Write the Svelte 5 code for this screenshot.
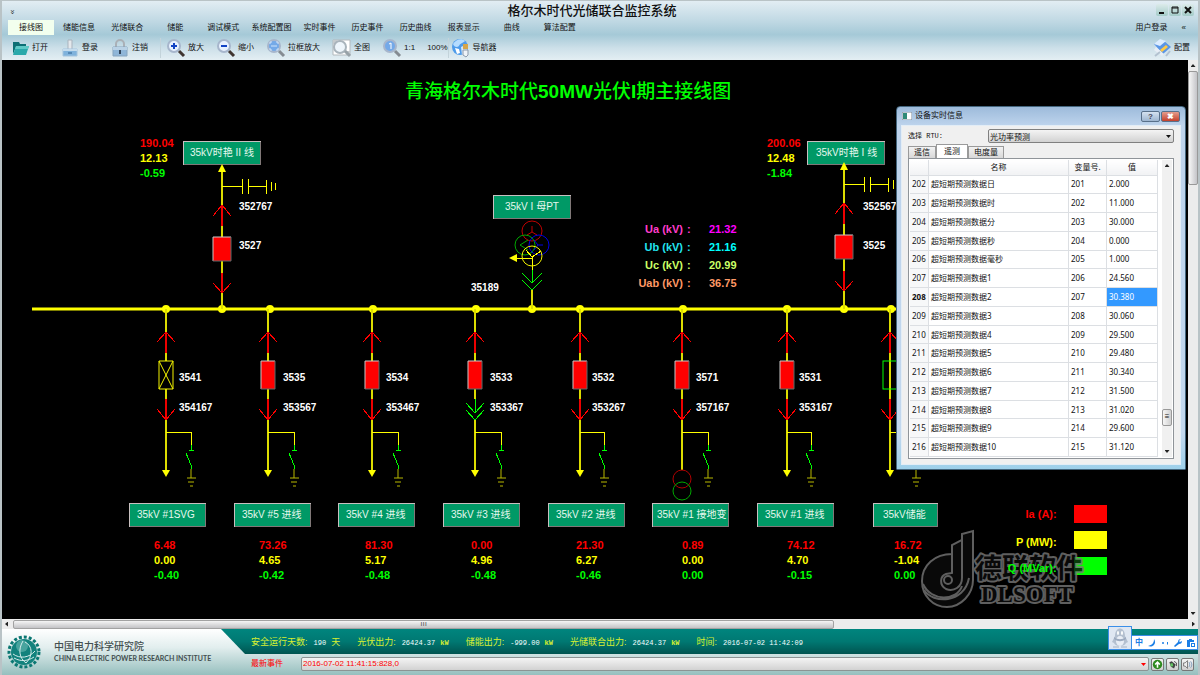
<script>
  const menuItems = ["接线图", "储能信息", "光储联合", "储能", "调试模式", "系统配置图", "实时事件", "历史事件", "历史曲线", "报表显示", "曲线", "算法配置"];
  let activeMenu = $state("接线图");

  const tools = [
    [
      { icon: "open", text: "打开" },
      { icon: "login", text: "登录" },
      { icon: "lock", text: "注销" },
    ],
    [
      { icon: "plus", text: "放大" },
      { icon: "minus", text: "缩小" },
      { icon: "frame", text: "拉框放大" },
      { icon: "full", text: "全图" },
      { icon: "one", text: "1:1" },
      { icon: "", text: "100%" },
    ],
    [{ icon: "globe", text: "导航器" }],
  ];

  // feeders below the bus: x = main line, dot = bus joint, bx = earthing branch
  const feeders = [
    { x: 166, dot: 166, bx: 191, lx: 179, no: "3541", sw: "354167", kind: "cross", name: "35kV #1SVG", nx: 129, tx: 8, vx: 154, v: ["6.48", "0.00", "-0.40"] },
    { x: 268, dot: 270, bx: 294, lx: 283, no: "3535", sw: "353567", kind: "red", name: "35kV #5 进线", nx: 234, tx: 8, vx: 259, v: ["73.26", "4.65", "-0.42"] },
    { x: 372, dot: 373, bx: 398, lx: 386, no: "3534", sw: "353467", kind: "red", name: "35kV #4 进线", nx: 338, tx: 8, vx: 365, v: ["81.30", "5.17", "-0.48"] },
    { x: 475, dot: 476, bx: 501, lx: 490, no: "3533", sw: "353367", kind: "red", open: true, name: "35kV #3 进线", nx: 443, tx: 8, vx: 471, v: ["0.00", "4.96", "-0.48"] },
    { x: 580, dot: 580, bx: 604, lx: 592, no: "3532", sw: "353267", kind: "red", name: "35kV #2 进线", nx: 548, tx: 8, vx: 576, v: ["21.30", "6.27", "-0.46"] },
    { x: 682, dot: 683, bx: 708, lx: 696, no: "3571", sw: "357167", kind: "red", transformer: true, name: "35kV #1 接地变", nx: 652, tx: 5, vx: 682, v: ["0.89", "0.00", "0.00"] },
    { x: 787, dot: 787, bx: 811, lx: 799, no: "3531", sw: "353167", kind: "red", name: "35kV #1 进线", nx: 757, tx: 8, vx: 787, v: ["74.12", "4.70", "-0.15"] },
    { x: 890, dot: 891, bx: 916, lx: 903, no: "", sw: "", kind: "green", name: "35kV储能", nx: 873, tx: 10, vx: 894, v: ["16.72", "-1.04", "0.00"] },
  ];

  const incomers = [
    { x: 222, y: 0, name: "35kV时艳 II 线", nx: 183, tx: 7, no: "3527", sw: "352767", lx: 239, vx: 140, v: ["190.04", "12.13", "-0.59"] },
    { x: 844, y: -2, name: "35kV时艳 I 线", nx: 807, tx: 9, no: "3525", sw: "352567", lx: 863, vx: 767, v: ["200.06", "12.48", "-1.84"] },
  ];

  const volts = [
    { name: "Ua (kV)", value: "21.32", color: "#ff3ccc", vcolor: "#ff00ff" },
    { name: "Ub (kV)", value: "21.16", color: "#22e4f0", vcolor: "#00ffff" },
    { name: "Uc (kV)", value: "20.99", color: "#ccff66", vcolor: "#ccff66" },
    { name: "Uab (kV)", value: "36.75", color: "#ff9966", vcolor: "#ff9966" },
  ];

  const legend = [
    { name: "Ia (A)", color: "#ff0000", y: 505, ty: 518 },
    { name: "P (MW)", color: "#ffff00", y: 531, ty: 546 },
    { name: "Q (MVar)", color: "#00ff00", y: 557, ty: 572 },
  ];

  const valueColors = ["#ff0000", "#ffff00", "#00ff00"];

  const names = ["日", "时", "分", "秒", "毫秒", "1", "2", "3", "4", "5", "6", "7", "8", "9", "10"];
  const values = ["2.000", "11.000", "30.000", "0.000", "1.000", "24.560", "30.380", "30.060", "29.500", "29.480", "30.340", "31.500", "31.020", "29.600", "31.120"];
  const rows = names.map((n, i) => ({ id: 202 + i, name: "超短期预测数据" + n, no: 201 + i, value: values[i] }));
  let selected = $state(208);

  const tabs = ["遥信", "遥测", "电度量"];
  let tab = $state("遥测");

  const status = [
    { name: "安全运行天数:", value: "190", unit: "天", wide: true },
    { name: "光伏出力:", value: "26424.37", unit: "kW" },
    { name: "储能出力:", value: "-999.00", unit: "kW" },
    { name: "光储联合出力:", value: "26424.37", unit: "kW" },
    { name: "时间:", value: "2016-07-02 11:42:09", unit: "" },
  ];
</script>

{#snippet toolIcon(icon)}
  <svg class="icon" viewBox="0 0 20 20" aria-hidden="true">
    {#if icon === "open"}
      <path d="M3 4h6l1 2h6v3H6l-3 7z" fill="#0d6f74" />
      <path d="M6 8h13l-3 9H3z" fill="#2aa9ab" />
      <path d="M6 8h13l-1 3H5z" fill="#5fc9c6" />
    {:else if icon === "login"}
      <path d="M8 2h4v10H8z" fill="#e4e8ec" stroke="#a9b3bd" />
      <path d="M3 11h14v7H3z" fill="#7fb2dc" stroke="#a4c4de" />
      <path d="M3 11h14v2H3z" fill="#c5dced" />
      <path d="M8 15h4" stroke="#2c5f8e" />
    {:else if icon === "lock"}
      <path d="M6 10V6a4 4 0 0 1 8 0v4" fill="none" stroke="#aab0b6" stroke-width="2" />
      <path d="M3 9h14v9H3z" fill="#8fb6d8" stroke="#86a5bf" />
      <path d="M3 9h14v3H3z" fill="#b9d2e6" />
      <path d="M10 12v4" stroke="#33475c" stroke-width="2" />
    {:else if icon === "full"}
      <path d="M1 2h17v15H1z" fill="#fff" stroke="#b3b9bd" />
      <path d="M1 2h4v4H1zM14 13h4v4h-4z" fill="#c5cacd" />
      <circle cx="8" cy="9" r="6" fill="#edf5fb" stroke="#a9b4bc" stroke-width="2" />
      <path d="M13 13l5 5" stroke="#98a2a8" stroke-width="3" />
    {:else if icon === "globe"}
      <circle cx="9" cy="9" r="8" fill="#4d9bea" />
      <path d="M2 6c3-5 9-6 12-3-2 2-5 2-6 5-2 2-5 1-6-2z" fill="#b4dcff" />
      <path d="M4 10l4 1 1 4-3 1z" fill="#fff" />
      <path d="M10 9l6-3v8l-5 3z" fill="#d8e8f8" />
      <path d="M12 6h5v5h-5z" fill="#d5a54a" />
      <path d="M12 12h5v5l-2 2-3-2z" fill="#eef3f8" stroke="#8c9aab" />
    {:else if icon === "config"}
      <path d="M2 6l9-4 8 7-8 7z" fill="#5b96e6" />
      <path d="M2 6l6-5 6 2-6 5z" fill="#dcecff" />
      <path d="M4 9l8 7-2 2-8-6z" fill="#e8eef6" />
      <path d="M8 12l6-5 2 2-6 5z" fill="#ffca45" />
      <path d="M3 18l5-4M14 18l4-5" stroke="#b3c2d0" stroke-width="2" />
    {:else}
      <circle cx="8" cy="8" r="6" fill={icon === "plus" || icon === "minus" ? "#e8f1ff" : "#74a9e8"} stroke="#a7b6cc" stroke-width="2" />
      <path d="M13 13l5 5" stroke={icon === "plus" || icon === "minus" ? "#3f3430" : "#858b92"} stroke-width="3" />
      {#if icon === "plus"}
        <path d="M5 8h6M8 5v6" stroke="#1443c4" stroke-width="2" />
      {:else if icon === "minus"}
        <path d="M5 8h6" stroke="#1443c4" stroke-width="2" />
      {:else if icon === "frame"}
        <path d="M4 6V4h2M10 4h2v2M12 10v2h-2M6 12H4v-2M5 8h6" fill="none" stroke="#cfe3fb" />
      {:else}
        <path d="M7 6l2-1v6" fill="none" stroke="#fff" />
      {/if}
    {/if}
  </svg>
{/snippet}

{#snippet nameplate(x, y, w, tx, text)}
  <svg {x} {y} width={w} height="24" class="plate">
    <rect width={w} height="24" fill="#807878" />
    <path d="M0 24V0H{w}" fill="none" stroke="#c8c0c0" stroke-width="2" />
    <rect x="1" y="1" width={w - 2} height="22" fill="#009966" />
    <text x={tx} y="15">{text}</text>
  </svg>
{/snippet}

{#snippet breaker(x, y, w, h)}
  <rect {x} {y} width={w} height={h} fill="#ff0000" />
  <path d="M{x} {y + h}V{y}H{x + w}" fill="none" stroke="#c8c8c8" />
  <path d="M{x + w} {y}V{y + h}H{x}" fill="none" stroke="#5a6a6a" />
{/snippet}

{#snippet readings(x, y, v)}
  {#each v as value, i}
    <text class="value" {x} y={y + i * 15} fill={valueColors[i]}>{value}</text>
  {/each}
{/snippet}

<div class="app">
  <header>
    <div class="title-row">
      <button class="more" aria-label="展开">»</button>
      <h1>格尔木时代光储联合监控系统</h1>
      <div class="window-buttons">
        <button aria-label="最小化"><svg viewBox="0 0 12 12"><path d="M3 9h5" /></svg></button>
        <button aria-label="最大化"><svg viewBox="0 0 12 12"><path d="M3 3h6v6H3zM3 4h6" stroke-width="1" /></svg></button>
        <button aria-label="关闭"><svg viewBox="0 0 12 12"><path d="M3 3l6 6M9 3l-6 6" /></svg></button>
      </div>
    </div>
    <div class="menu-row">
      <nav>
        {#each menuItems as item}
          <button class:active={activeMenu === item} onclick={() => (activeMenu = item)}>{item}</button>
        {/each}
      </nav>
      <div class="user">
        <button>用户登录</button>
        <button aria-label="收起">«</button>
      </div>
    </div>
    <div class="toolbar">
      {#each tools as group}
        <div class="tool-group">
          {#each group as tool}
            <button>
              {#if tool.icon}{@render toolIcon(tool.icon)}{/if}
              {tool.text}
            </button>
          {/each}
        </div>
      {/each}
      <button class="config">{@render toolIcon("config")}配置</button>
    </div>
  </header>

  <main>
    <div class="stage">
      <svg class="diagram" width="1186" height="559" viewBox="2 60 1186 559">
        <text class="heading" x="405" y="98">青海格尔木时代<tspan>50MW</tspan>光伏<tspan>I</tspan>期主接线图</text>

        <!-- bus -->
        <path d="M32 309H897" stroke="#ffff00" stroke-width="3" />
        {#each feeders as f}
          <circle cx={f.dot} cy="309" r="4" fill="#ffff00" />
        {/each}
        <circle cx="532" cy="309" r="4" fill="#ffff00" />

        {#each incomers as f}
          {@const x = f.x}
          {@render nameplate(f.nx, 141, 78, f.tx, f.name)}
          {@render readings(f.vx, 147, f.v)}
          <circle cx={x} cy="309" r="4" fill="#ffff00" />
          <g transform="translate(0 {f.y})">
            <path class="wire" d="M{x} 170V205M{x} 226V237M{x} 261V273M{x} 293V{309 - f.y}" />
            <path class="thin" d="M{x} 186h20M{x + 20} 179v15M{x + 26} 179v15M{x + 26} 186h18M{x + 44} 180v14M{x + 49} 182v9M{x + 53} 183v7" />
            <path d="M{x} 164l4 8h-8z" fill="#ffff00" />
            <path class="closed" d="M{x} 226V205M{x} 273v20" />
            <path class="wing" d="M{x - 9} 216l9 -11l9 11M{x - 9} 283l9 10l9 -10" />
            {@render breaker(x - 9, 237, 18, 24)}
          </g>
          <text class="device" x={f.lx} y="210">{f.sw}</text>
          <text class="device" x={f.lx} y="249">{f.no}</text>
        {/each}

        <!-- potential transformer -->
        {@render nameplate(493, 195, 78, 12, "35kV I 母PT")}
        <g fill="none" stroke-width="1">
          <circle cx="532" cy="231" r="10" stroke="#c00000" />
          <path d="M532 226v6l-5 3M532 232l5 3" stroke="#c00000" />
          <circle cx="525" cy="245" r="10" stroke="#00a800" />
          <path d="M528 240l-8 5l8 5" stroke="#00a800" />
          <circle cx="539" cy="245" r="10" stroke="#0000e0" />
          <path d="M543 245h-5l-4 -5M538 245l-4 5" stroke="#0000e0" />
        </g>
        <path d="M532 270V257L526 250M532 257L541 251M532 258H515" class="thin" />
        <circle cx="532" cy="256" r="10" class="ring" />
        <path d="M509 258l8 -4v8z" fill="#ffff00" />
        <path class="opened" d="M532 270v13M522 273l10 10l10 -10M522 280l10 10l10 -10" />
        <path class="wire" d="M532 290V309" />
        <text class="device" x="471" y="291">35189</text>

        {#each volts as u, i}
          <text class="value" x="683" y={233 + i * 18} text-anchor="end" fill={u.color}>{u.name}</text>
          <text class="value" x="687" y={233 + i * 18} fill={u.color}>:</text>
          <text class="value" x="709" y={233 + i * 18} fill={u.vcolor}>{u.value}</text>
        {/each}

        {#each feeders as f}
          {@const x = f.x}
          {@const b = f.bx}
          <path class="wire" d="M{x} 309V332M{x} 352V361M{x} 389V399M{x} 420V470" />
          <path class="thin" d="M{x} 432H{b}V445" />
          <path class="closed" d="M{x} 353V332" />
          <path class="wing" d="M{x - 9} 342l9 -10l9 10" />
          {#if f.open}
            <path class="opened" d="M{x} 399V413M{x - 9} 403l9 10l9 -10M{x - 9} 410l9 10l9 -10" />
          {:else}
            <path class="closed" d="M{x} 399V420" />
            <path class="wing" d="M{x - 9} 409l9 11l9 -11" />
          {/if}
          {#if f.kind === "cross"}
            <path class="ring" d="M{x - 7} 361h14v28h-14zl14 28M{x + 7} 361l-14 28" />
          {:else if f.kind === "green"}
            <path class="wire" d="M{x} 361v28" />
            <rect x={x - 7} y="361" width="14" height="28" fill="none" stroke="#00ff00" />
          {:else}
            {@render breaker(x - 7, 361, 14, 28)}
          {/if}
          {#if f.transformer}
            <circle cx={x} cy="479" r="9" fill="none" stroke="#b00000" />
            <circle cx={x} cy="491" r="9" fill="none" stroke="#00a800" />
          {:else}
            <path d="M{x - 4} 470h8l-4 7z" fill="#ffff00" />
          {/if}
          <path class="opened" d="M{b} 445v5M{b - 2} 450h5M{b - 5} 453l5 12v4" />
          <path d="M{b} 469v9M{b - 4} 478h9M{b - 3} 482h6M{b - 1} 486h3" stroke="#b8b800" />
          <text class="device" x={f.lx} y="381">{f.no}</text>
          <text class="device" x={f.lx} y="411">{f.sw}</text>
          {@render nameplate(f.nx, 503, f.kind === "green" ? 65 : 77, f.tx, f.name)}
          {@render readings(f.vx, 549, f.v)}
        {/each}

        {#each legend as l}
          <rect x="1074" y={l.y} width="33" height="18" fill={l.color} />
        {/each}

        <!-- vendor mark -->
        <g class="mark">
          <path d="M952 554V545l10 -5V534l11 -3V580c0 14 -12 27 -26 27c-14 0 -25 -11 -25 -26c0 -16 13 -27 30 -27z" />
          <path d="M962 540V578c0 9 -8 14 -16 11c-7 -4 -6 -13 0 -15l6 -1V554M924 590c9 14 40 14 45 -12M923 584c8 18 34 17 39 2" fill="none" />
          <circle cx="948" cy="580" r="4" />
          <text x="975" y="578" class="mark-cn">德联软件</text>
          <text x="981" y="602" class="mark-en">DLSOFT</text>
        </g>

        {#each legend as l}
          <text class="value" x="1053" y={l.ty} text-anchor="end" fill={l.color}>{l.name}</text>
          <text class="value" x="1053" y={l.ty} fill={l.color}>:</text>
        {/each}
      </svg>
    </div>
    <div class="vbar">
      <span class="tri up"></span>
      <span class="thumb"></span>
      <span class="tri down"></span>
    </div>
  </main>

  <div class="hbar">
    <span class="tri left"></span>
    <span class="thumb">ııı</span>
    <span class="tri right"></span>
  </div>

  <footer>
    <div class="brand">
      <svg viewBox="0 0 36 36" aria-hidden="true">
        <circle cx="18" cy="18" r="15" fill="none" stroke="#0a7772" stroke-width="3" stroke-dasharray="3 2" />
        <circle cx="18" cy="18" r="13" fill="#12827d" />
        <circle cx="16" cy="12" r="6" fill="#6cbab4" opacity="0.6" />
        <path d="M7 20c7 5 16 4 22 -3M17 7c-5 8 -4 17 3 22M19 8c8 4 8 14 1 21M8 24c7 4 14 3 20 -1" fill="none" stroke="#d4eceb" />
      </svg>
      <div>
        <strong>中国电力科学研究院</strong>
        <small>CHINA ELECTRIC POWER RESEARCH INSTITUTE</small>
      </div>
    </div>
    <div class="status">
      <div class="readout">
        {#each status as s}
          <span>{s.name}<b>{s.value}</b>{#if s.wide}{s.unit}{:else}<i>{s.unit}</i>{/if}</span>
        {/each}
      </div>
      <div class="event">
        <label for="event">最新事件</label>
        <div class="combo">
          <select id="event"><option>2016-07-02 11:41:15:828,0</option></select>
          <span class="tri down"></span>
        </div>
        <button aria-label="上一条">
          <svg viewBox="0 0 14 14"><circle cx="7" cy="7" r="6" fill="#2c8a1f" /><path d="M7 11V5M4 7l3-3 3 3" fill="none" stroke="#fff" stroke-width="2" /></svg>
        </button>
        <button aria-label="确认">
          <svg viewBox="0 0 14 14"><path d="M3 4l3-1 5 4-2 5-4-2z" fill="#444" /><path d="M4 6l3-1 1 4-3 1z" fill="#63c763" /><path d="M9 3l3 2v4" fill="none" stroke="#333" /></svg>
        </button>
        <button aria-label="声音">
          <svg viewBox="0 0 14 14"><path d="M2 5h2l3-3v10l-3-3H2z" fill="#eee" stroke="#666" /><path d="M9 4c1 2 1 4 0 6M11 3c2 3 2 6 0 8" fill="none" stroke="#6a8fb5" /></svg>
        </button>
      </div>
    </div>
  </footer>

  <section class="dialog" aria-label="设备实时信息">
    <div class="dialog-title">
      <svg viewBox="0 0 10 8" aria-hidden="true"><path d="M0 0h10v8H0z" fill="#fff" stroke="#7a8896" /><path d="M1 1h4v6H1z" fill="#2f8a77" /></svg>
      <span>设备实时信息</span>
      <button class="help" aria-label="帮助">?</button>
      <button class="close" aria-label="关闭">✖</button>
    </div>
    <div class="dialog-body">
      <div class="rtu">
        <label for="rtu">选择 RTU:</label>
        <div class="combo">
          <select id="rtu"><option>光功率预测</option></select>
          <span class="tri down"></span>
        </div>
      </div>
      <div class="tabs" role="tablist">
        {#each tabs as t}
          <button role="tab" aria-selected={tab === t} class:active={tab === t} onclick={() => (tab = t)}>{t}</button>
        {/each}
      </div>
      <div class="grid">
        <table>
          <thead>
            <tr><th class="id"></th><th>名称</th><th class="no">变量号.</th><th class="val">值</th></tr>
          </thead>
          <tbody>
            {#each rows as row}
              <tr class:selected={selected === row.id} onclick={() => (selected = row.id)}>
                <th scope="row">{row.id}</th>
                <td>{row.name}</td>
                <td>{row.no}</td>
                <td>{row.value}</td>
              </tr>
            {/each}
          </tbody>
        </table>
        <div class="grid-bar">
          <span class="tri up"></span>
          <span class="thumb">≡</span>
          <span class="tri down"></span>
        </div>
      </div>
    </div>
  </section>

  <!-- floating input method bar -->
  <div class="ime">
    <div class="penguin">
      <svg viewBox="0 0 22 22" aria-hidden="true">
        <path d="M6 9c0-10 10-10 10 0l3 6-2 1c-1 4-11 4-12 0l-2-1z" fill="#b4c0d0" />
        <ellipse cx="11" cy="14" rx="4" ry="5" fill="#e9eef6" />
        <path d="M5 10c4 3 8 3 12 0v2c-4 3-8 3-12 0z" fill="#9dabc0" />
        <ellipse cx="9" cy="6" rx="1" ry="2" fill="#fff" /><ellipse cx="13" cy="6" rx="1" ry="2" fill="#fff" />
        <path d="M4 20h6M12 20h6" stroke="#c3cddb" stroke-width="2" />
      </svg>
    </div>
    <div class="ime-bar">
      <span>中</span>
      <svg viewBox="0 0 8 8"><path d="M6 0c3 4-1 9-6 7 4-1 6-3 6-7z" /></svg>
      <svg viewBox="0 0 8 8"><circle cx="2" cy="4" r="1" /><path d="M6 3h1v2l-1 1z" /></svg>
      <svg viewBox="0 0 8 8"><path d="M0 7l4-4c0-2 1-3 3-3L5 2l1 1 2-1c0 2-1 3-3 3L1 8z" /></svg>
      <svg viewBox="0 0 8 8"><path d="M0 1h2V0h3v1h2v2H3v5H0zM4 4h4v4H4zM5 5v2h2V5z" fill-rule="evenodd" /></svg>
    </div>
  </div>
</div>

<style>
  .app {
    position: relative;
    box-sizing: border-box;
    min-height: 100vh;
    display: flex;
    flex-direction: column;
    border: solid #b9c3c6;
    border-width: 1px 2px;
    overflow: hidden;
    background: #eee;
    color: #111;
    font: 8px/12px "Liberation Sans", "Noto Sans CJK SC", sans-serif;
  }

  button,
  select {
    margin: 0;
    padding: 0;
    border: 0;
    border-radius: 0;
    background: none;
    color: inherit;
    font: inherit;
    white-space: nowrap;
  }

  header {
    background: linear-gradient(#e2edf3 0%, #bfd8e3 35%, #a5c9d7 57%, #cde0e9 80%, #e3eef3 100%);
  }

  .title-row {
    display: grid;
    grid-template-columns: 1fr auto 1fr;
    height: 19px;
    padding: 0 4px 0 6px;
  }

  h1 {
    margin: 0;
    font-size: 13px;
    font-weight: 500;
    line-height: 20px;
    padding-right: 18px;
  }

  .more {
    width: 8px;
    height: 12px;
    margin-top: 5px;
    transform: rotate(90deg);
  }

  .window-buttons {
    display: flex;
    justify-content: flex-end;
    gap: 1px;
    padding-top: 3px;
  }

  .window-buttons button {
    width: 12px;
    height: 12px;
    border-radius: 2px;
    background: linear-gradient(#dcebea, #a3cbc8);
  }

  .window-buttons svg {
    display: block;
    fill: none;
    stroke: #111;
    stroke-width: 2;
  }

  .menu-row {
    display: flex;
    justify-content: space-between;
    height: 15px;
    padding: 0 12px 0 6px;
  }

  nav {
    display: flex;
    justify-content: space-between;
    width: 575px;
  }

  nav button {
    min-width: 46px;
    height: 15px;
    line-height: 14px;
  }

  nav .active {
    background: #f2ffee;
  }

  .user {
    display: flex;
    gap: 14px;
  }

  .toolbar {
    display: flex;
    align-items: center;
    height: 25px;
    padding: 0 8px;
  }

  .tool-group {
    display: flex;
    gap: 12px;
    align-items: center;
  }

  .tool-group + .tool-group {
    margin-left: 12px;
    padding-left: 5px;
    border-left: 1px solid #c3d3da;
  }

  .toolbar .tool-group:last-of-type {
    margin-left: 0;
    padding-left: 2px;
  }

  .toolbar button {
    display: flex;
    align-items: center;
    gap: 2px;
  }

  .toolbar .config {
    margin-left: auto;
  }

  .icon {
    width: 20px;
    height: 20px;
  }

  main {
    flex: 1;
    display: flex;
    min-width: 0;
  }

  .stage {
    flex: 1;
    min-width: 0;
    overflow: hidden;
    background: #000;
  }

  .diagram {
    display: block;
    font-family: "Liberation Sans", "Noto Sans CJK SC", sans-serif;
  }

  .heading {
    font-size: 19px;
    font-weight: 500;
    fill: #00ff00;
  }

  .heading tspan {
    font-weight: 700;
  }

  .plate text {
    font-size: 10px;
    fill: #e6f8ee;
  }

  .value {
    font-size: 11px;
    font-weight: 700;
  }

  .device {
    font-size: 10px;
    font-weight: 700;
    fill: #fff;
  }

  .wire {
    fill: none;
    stroke: #dcdc00;
    stroke-width: 2px;
  }

  .thin {
    fill: none;
    stroke: #ffff00;
    stroke-width: 1px;
    shape-rendering: crispEdges;
  }

  .ring {
    fill: none;
    stroke: #f4f400;
    stroke-width: 1px;
  }

  .closed {
    fill: none;
    stroke: #ee0000;
    stroke-width: 2px;
  }

  .wing {
    fill: none;
    stroke: #ff0000;
    stroke-width: 1px;
    shape-rendering: crispEdges;
  }

  .opened {
    fill: none;
    stroke: #00ff00;
    stroke-width: 1px;
    shape-rendering: crispEdges;
  }

  .mark {
    fill: #0c0c0c;
    stroke: #777;
    stroke-width: 2px;
    opacity: 0.8;
  }

  .mark text {
    paint-order: stroke;
    stroke-width: 4px;
    stroke-linejoin: round;
    font-weight: 700;
  }

  .mark-cn {
    font-size: 27px;
  }

  .mark-en {
    font-family: "Liberation Serif", serif;
    font-size: 23px;
  }

  .tri {
    width: 5px;
    height: 3px;
    background: #222;
    clip-path: polygon(0 0, 100% 0, 50% 100%);
  }

  .tri.up {
    clip-path: polygon(50% 0, 100% 100%, 0 100%);
  }

  .tri.left {
    width: 3px;
    height: 5px;
    clip-path: polygon(100% 0, 100% 100%, 0 50%);
  }

  .tri.right {
    width: 3px;
    height: 5px;
    clip-path: polygon(0 0, 100% 50%, 0 100%);
  }

  .vbar {
    display: flex;
    flex-direction: column;
    align-items: center;
    width: 10px;
    padding: 4px 0;
    background: #ececec;
  }

  .vbar .thumb {
    box-sizing: border-box;
    width: 10px;
    height: 114px;
    margin: 4px 0 auto;
    border: 1px solid #999;
    border-radius: 2px;
    background: linear-gradient(90deg, #f6f6f6, #c4c4c8);
  }

  .hbar {
    display: flex;
    align-items: center;
    height: 10px;
    padding: 0 3px;
    background: #ececec;
  }

  .hbar .thumb {
    box-sizing: border-box;
    width: 69%;
    height: 9px;
    margin: 0 auto 0 5px;
    border: 1px solid #a2a2a2;
    border-radius: 2px;
    background: linear-gradient(#f5f5f5, #c3c3c6);
    color: #555;
    line-height: 6px;
    text-align: center;
  }

  footer {
    display: flex;
    height: 46px;
    background: linear-gradient(#fff, #e2eeee 40%, #96bfbe);
  }

  .brand {
    display: flex;
    align-items: center;
    gap: 12px;
    width: 219px;
    padding-left: 4px;
    box-sizing: border-box;
    color: #444f50;
  }

  .brand svg {
    width: 36px;
    height: 36px;
  }

  .brand strong,
  .brand small {
    display: block;
    white-space: nowrap;
  }

  .brand strong {
    font-size: 10px;
    font-weight: 500;
  }

  .brand small {
    font: 700 7px/10px Lato, sans-serif;
  }

  .status {
    flex: 1;
    min-width: 0;
    display: flex;
    flex-direction: column;
  }

  .readout {
    display: flex;
    gap: 17px;
    height: 25px;
    padding-left: 30px;
    align-items: center;
    background: linear-gradient(#00857e, #007872 50%, #005450);
    clip-path: polygon(0 0, 100% 0, 100% 100%, 24px 100%);
    color: #d8f030;
    font-size: 9px;
    white-space: nowrap;
  }

  .readout b {
    margin: 0 5px 0 6px;
    color: #f4ffff;
    font: 400 7px "Liberation Mono", monospace;
  }

  .readout i {
    font: 700 7px "Liberation Mono", monospace;
  }

  .event {
    display: flex;
    align-items: center;
    gap: 2px;
    height: 20px;
    padding: 0 4px 0 30px;
    color: #ff0000;
  }

  .event label {
    width: 48px;
  }

  .combo {
    position: relative;
    flex: 1;
    display: flex;
  }

  .combo select {
    flex: 1;
    height: 14px;
    padding: 0 1px;
    border: 1px solid #8c9494;
    border-radius: 2px;
    background: linear-gradient(#f4f4f4, #d2d2d2);
    appearance: none;
  }

  .combo .tri {
    position: absolute;
    right: 3px;
    top: 6px;
    background: currentColor;
    pointer-events: none;
  }

  .event button {
    width: 13px;
    height: 13px;
    border: 1px solid #777;
    border-radius: 2px;
    background: linear-gradient(#f5f5f5, #cfcfcf);
  }

  .event button svg {
    display: block;
  }

  .dialog {
    position: absolute;
    top: 105px;
    right: 12px;
    box-sizing: border-box;
    width: 290px;
    padding: 0 4px 4px;
    border: 1px solid #44667e;
    border-radius: 4px 4px 1px 1px;
    background: linear-gradient(#9dbbdb, #bdd3ec 18px, #c3d8ee 90%, #9ed0ea);
  }

  .dialog-title {
    display: flex;
    align-items: center;
    gap: 1px;
    height: 18px;
    padding: 0 1px;
  }

  .dialog-title svg {
    width: 10px;
    height: 8px;
  }

  .dialog-title span {
    margin: 0 auto 0 2px;
  }

  .dialog-title button {
    width: 19px;
    height: 11px;
    border: 1px solid #58708a;
    border-radius: 2px;
    background: linear-gradient(#d5e2f0, #9db5d0);
    color: #445;
    font-weight: 700;
    line-height: 9px;
  }

  .dialog-title .close {
    background: linear-gradient(#e59c8c, #c4402c);
    color: #fff;
  }

  .dialog-body {
    padding: 3px 6px 5px;
    border: 1px solid #e3edf6;
    background: #f0f0f0;
  }

  .rtu {
    display: flex;
    align-items: center;
    height: 14px;
    font-family: "Liberation Mono", "Noto Sans CJK SC", monospace;
    font-size: 7px;
  }

  .rtu label {
    width: 80px;
  }

  .rtu select {
    font: 8px "Noto Sans CJK SC", sans-serif;
    border-color: #808080;
  }

  .tabs {
    display: flex;
    align-items: flex-end;
    height: 15px;
  }

  .tabs button {
    height: 12px;
    padding: 0 5px;
    border: 1px solid #9a9a9a;
    border-bottom: 0;
    background: linear-gradient(#f2f2f2, #d8d8d8);
    line-height: 11px;
  }

  .tabs .active {
    height: 14px;
    padding: 0 7px;
    background: #fff;
  }

  .grid {
    display: flex;
    padding: 1px;
    border: 1px solid #8f9499;
    background: #fff;
  }

  table {
    flex: 1;
    height: 297px;
    margin-right: 4px;
    border-collapse: collapse;
    table-layout: fixed;
    font: 8px/10px "Noto Sans", "Noto Sans CJK SC", sans-serif;
  }

  th,
  td {
    padding: 0 2px;
    border: solid #dcdfe3;
    border-width: 0 1px 1px 0;
    text-align: left;
    white-space: nowrap;
  }

  thead tr {
    height: 15px;
  }

  thead th {
    padding: 0;
    background: linear-gradient(#fff, #f1f2f4);
    font-weight: 400;
    text-align: center;
  }

  tbody th {
    font-weight: 400;
    background: #f7f8f9;
  }

  .id {
    width: 18px;
  }

  .no {
    width: 37px;
  }

  .val {
    width: 50px;
  }

  .selected th {
    font-weight: 700;
  }

  .selected td:last-child {
    background: #3399ff;
    color: #fff;
  }

  .grid-bar {
    display: flex;
    flex-direction: column;
    justify-content: space-between;
    align-items: center;
    width: 10px;
    padding: 4px 0;
    background: #f0f0f0;
  }

  .grid-bar .thumb {
    width: 8px;
    height: 15px;
    margin: auto 0 24px;
    border: 1px solid #999;
    border-radius: 2px;
    background: linear-gradient(90deg, #f6f6f6, #d0d0d0);
    line-height: 14px;
    text-align: center;
  }

  .ime {
    position: absolute;
    right: 0;
    bottom: 25px;
    display: flex;
    align-items: flex-end;
  }

  .penguin {
    width: 22px;
    height: 22px;
    border: 1px solid #3a8ee8;
    background: #dfe7f2;
  }

  .ime-bar {
    display: flex;
    align-items: center;
    gap: 5px;
    height: 13px;
    padding: 0 2px 0 3px;
    border: 1px solid #3a8ee8;
    border-left: 0;
    background: #fff;
    color: #1a7ee6;
    font-weight: 700;
  }

  .ime-bar svg {
    width: 8px;
    height: 8px;
    fill: #1a7ee6;
  }
</style>
